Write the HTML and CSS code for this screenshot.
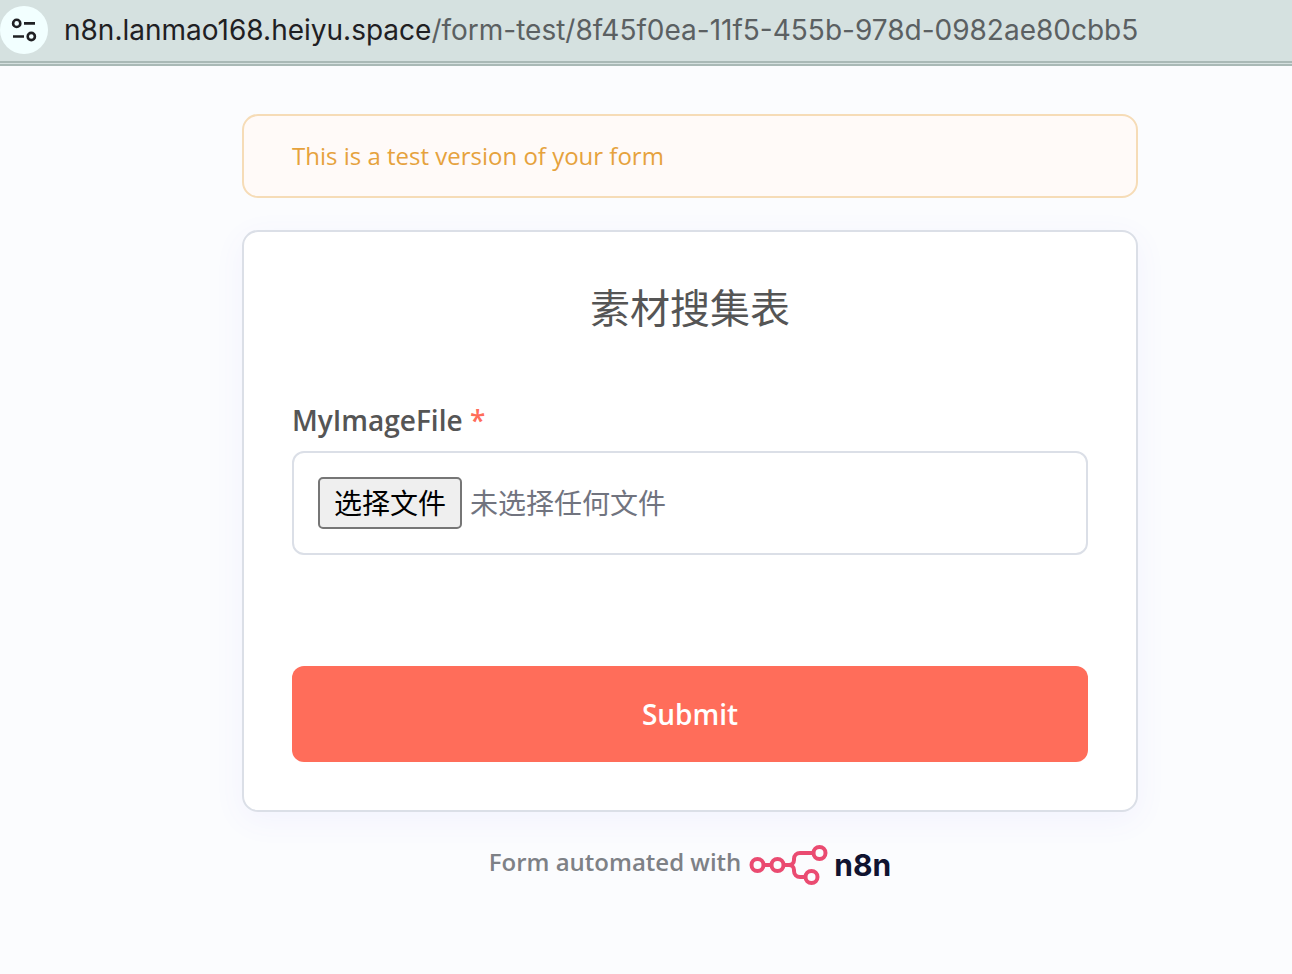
FILE: index.html
```html
<!DOCTYPE html>
<html lang="zh-CN">
<head>
  <meta charset="UTF-8" />
  <meta name="viewport" content="width=device-width, initial-scale=1.0" />
  <title>素材搜集表</title>
  <link rel="stylesheet" href="styles.css">
</head>
<body>
  <header class="address-bar">
    <button class="site-info" type="button" aria-label="Site information">
      <svg width="26" height="26" viewBox="0 0 26 26" fill="none" stroke="#1f2023" stroke-width="2.6">
        <circle cx="5.7" cy="6.4" r="3.6" />
        <path d="M13 6.4h11M2 19.500h11" />
        <circle cx="20.3" cy="19.5" r="3.6" />
      </svg>
    </button>
    <div class="url">n8n.lanmao168.heiyu.space<span class="path">/form-test/8f45f0ea-11f5-455b-978d-0982ae80cbb5</span></div>
  </header>

  <main class="container">
    <div class="test-notice">This is a test version of your form</div>

    <form class="card" id="uploadForm">
      <h1>素材搜集表</h1>

      <label class="field-label" for="imageFile">MyImageFile <span class="required">*</span></label>
      <div class="file-field">
        <input class="file-input" type="file" id="imageFile" name="MyImageFile" tabindex="-1" />
        <button class="choose" type="button" id="chooseFile">选择文件</button>
        <span class="file-name" id="fileName">未选择任何文件</span>
      </div>

      <button class="submit" type="submit">Submit</button>
    </form>

    <a class="powered-by" href="#">
      <span>Form automated with</span>
      <span class="logo">
        <svg width="80" height="42" viewBox="0 0 80 42" fill="none" stroke="#ea4b71" stroke-width="4">
          <circle cx="8.5" cy="21" r="6" />
          <circle cx="28.5" cy="21" r="6" />
          <circle cx="70.5" cy="9" r="6" />
          <circle cx="62.5" cy="33" r="6" />
          <path d="M14.5 21h8M34.5 21h5.500a5 5 0 0 0 5-5v-1a6 6 0 0 1 6-6h13.500M40 21a5 5 0 0 1 5 5v1a6 6 0 0 0 6 6h5.500" />
        </svg>
        <span class="brand">n8n</span>
      </span>
    </a>
  </main>

  <script>
    const fileInput = document.getElementById('imageFile');

    document.getElementById('chooseFile').addEventListener('click', function () {
      fileInput.click();
    });

    fileInput.addEventListener('change', function () {
      const file = fileInput.files[0];
      document.getElementById('fileName').innerText = file ? file.name : '未选择任何文件';
    });
  </script>
</body>
</html>
```
FILE: styles.css
```css
* {
  box-sizing: border-box;
}
body {
  margin: 0;
  background: #fbfcfe;
  color: #555;
  font-family: "Open Sans", "Noto Sans CJK SC", sans-serif;
}
button {
  font-family: inherit;
  cursor: pointer;
}
.address-bar {
  display: flex;
  align-items: center;
  gap: 16px;
  height: 66px;
  padding-bottom: 1px;
  background: #d5e1e0;
  border-bottom: 5px double #a9b9b6;
}
.site-info {
  display: flex;
  align-items: center;
  justify-content: center;
  width: 48px;
  height: 48px;
  padding: 0;
  border: none;
  border-radius: 50%;
  background: #f2ffff;
}
.url {
  color: #1f2023;
  font-family: Inter, "Liberation Sans", sans-serif;
  font-size: 28px;
  white-space: nowrap;
}
.url .path {
  color: #5b6062;
}
.container {
  display: flex;
  flex-direction: column;
  max-width: 984px;
  margin: 0 auto;
  padding: 48px 0 48px 88px;
}
.test-notice {
  margin-bottom: 32px;
  padding: 24px 48px;
  border: 2px solid #f6dcb7;
  border-radius: 16px;
  background: #fffaf8;
  color: #e6a23d;
  font-size: 24px;
  line-height: 32px;
}
.card {
  padding: 48px;
  border: 2px solid #dbdfe7;
  border-radius: 16px;
  background: #fff;
  box-shadow: 0 8px 32px rgba(99, 77, 255, 0.06);
}
h1 {
  margin: 0 0 64px;
  font-size: 40px;
  font-weight: 400;
  line-height: 56px;
  text-align: center;
}
.field-label {
  display: block;
  margin-bottom: 11px;
  font-size: 28px;
  font-weight: 600;
  line-height: 40px;
}
.required {
  color: #ff6d5a;
}
.file-field {
  display: flex;
  align-items: center;
  gap: 8px;
  padding: 24px;
  border: 2px solid #dbdfe7;
  border-radius: 12px;
  font-size: 28px;
  line-height: 40px;
}
.file-input {
  display: none;
}
.choose {
  padding: 4px 14px;
  border: 2px solid #767676;
  border-radius: 5px;
  background: #efefef;
  color: #000;
  font-size: 28px;
  line-height: 40px;
}
.file-name {
  color: #71747f;
}
.submit {
  width: 100%;
  margin-top: 111px;
  padding: 28px;
  border: none;
  border-radius: 12px;
  background: #ff6d5a;
  color: #fff;
  font-size: 28px;
  font-weight: 600;
  line-height: 40px;
}
.powered-by {
  display: flex;
  align-items: flex-start;
  align-self: center;
  gap: 8px;
  margin-top: 32px;
  color: #7e8186;
  font-size: 24px;
  font-weight: 600;
  line-height: 36px;
  text-decoration: none;
}
.logo {
  display: flex;
  align-items: center;
  gap: 5px;
}
.brand {
  color: #101330;
  font-family: Inter, sans-serif;
  font-size: 30px;
  font-weight: 700;
}
```
